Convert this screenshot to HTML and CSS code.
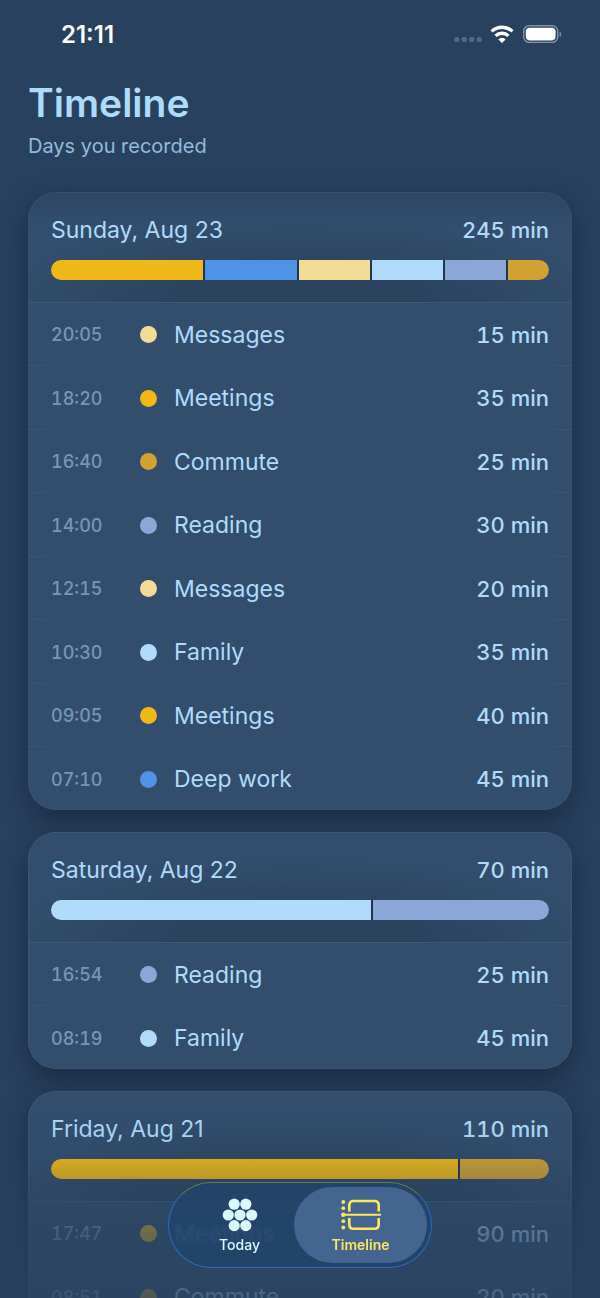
FILE: index.html
```
<!DOCTYPE html>
<html lang="en">
<head>
    <meta charset="UTF-8">
    <meta name="viewport" content="width=device-width, initial-scale=1.0">
    <title>Timeline</title>
    <link rel="stylesheet" href="styles.css">
</head>
<body>
<div class="screen">
    <div class="status-bar">
        <span class="clock">21:11</span>
        <div class="status-icons">
            <svg width="28" height="6" viewBox="0 0 28 6" fill="#566a84">
                <rect x="0.3" y="0" width="5" height="5" rx="1.6"/>
                <rect x="7.7" y="0" width="5" height="5" rx="1.6"/>
                <rect x="15.2" y="0" width="5" height="5" rx="1.6"/>
                <rect x="22.7" y="0" width="5" height="5" rx="1.6"/>
            </svg>
            <svg class="wifi" width="24" height="18" viewBox="0 0 24 18" fill="none" stroke="#fff" stroke-width="3.4">
                <path d="M1.6 6.4C7.4 .8 16.6 .8 22.4 6.4"/>
                <path d="M5.6 10.9c3.6-3.5 9.2-3.5 12.8 0"/>
                <path d="M12 18l-3.6-3.6c1.9-1.9 5.3-1.9 7.2 0z" fill="#fff" stroke="none"/>
            </svg>
            <svg class="battery" width="39" height="18" viewBox="0 0 39 18">
                <rect x=".7" y=".7" width="34" height="16.8" rx="5.6" fill="none" stroke="#8493a7" stroke-width="1.4"/>
                <rect x="2.8" y="2.8" width="29.8" height="12.6" rx="3.8" fill="#fff"/>
                <path d="M36.6 6.4c2 .8 2 4.8 0 5.6z" fill="#8493a7"/>
            </svg>
        </div>
    </div>

    <main class="content">
        <h1>Timeline</h1>
        <p class="subtitle">Days you recorded</p>

        <section class="day">
            <header class="day-header">
                <div class="day-title">
                    <h2>Sunday, Aug 23</h2>
                    <span class="minutes">245 min</span>
                </div>
                <div class="bar">
                    <span class="meetings" style="width: 30.6%"></span>
                    <span class="deep-work" style="width: 18.4%"></span>
                    <span class="messages" style="width: 14.3%"></span>
                    <span class="family" style="width: 14.3%"></span>
                    <span class="reading" style="width: 12.2%"></span>
                    <span class="commute" style="width: 10.2%"></span>
                </div>
            </header>
            <ul class="entries">
                <li><time>20:05</time><i class="dot messages"></i><span class="name">Messages</span><span class="minutes">15 min</span></li>
                <li><time>18:20</time><i class="dot meetings"></i><span class="name">Meetings</span><span class="minutes">35 min</span></li>
                <li><time>16:40</time><i class="dot commute"></i><span class="name">Commute</span><span class="minutes">25 min</span></li>
                <li><time>14:00</time><i class="dot reading"></i><span class="name">Reading</span><span class="minutes">30 min</span></li>
                <li><time>12:15</time><i class="dot messages"></i><span class="name">Messages</span><span class="minutes">20 min</span></li>
                <li><time>10:30</time><i class="dot family"></i><span class="name">Family</span><span class="minutes">35 min</span></li>
                <li><time>09:05</time><i class="dot meetings"></i><span class="name">Meetings</span><span class="minutes">40 min</span></li>
                <li><time>07:10</time><i class="dot deep-work"></i><span class="name">Deep work</span><span class="minutes">45 min</span></li>
            </ul>
        </section>

        <section class="day">
            <header class="day-header">
                <div class="day-title">
                    <h2>Saturday, Aug 22</h2>
                    <span class="minutes">70 min</span>
                </div>
                <div class="bar">
                    <span class="family" style="width: 64.3%"></span>
                    <span class="reading" style="width: 35.7%"></span>
                </div>
            </header>
            <ul class="entries">
                <li><time>16:54</time><i class="dot reading"></i><span class="name">Reading</span><span class="minutes">25 min</span></li>
                <li><time>08:19</time><i class="dot family"></i><span class="name">Family</span><span class="minutes">45 min</span></li>
            </ul>
        </section>

        <section class="day">
            <header class="day-header">
                <div class="day-title">
                    <h2>Friday, Aug 21</h2>
                    <span class="minutes">110 min</span>
                </div>
                <div class="bar">
                    <span class="meetings" style="width: 81.8%"></span>
                    <span class="commute" style="width: 18.2%"></span>
                </div>
            </header>
            <ul class="entries">
                <li><time>17:47</time><i class="dot meetings"></i><span class="name">Meetings</span><span class="minutes">90 min</span></li>
                <li><time>08:51</time><i class="dot commute"></i><span class="name">Commute</span><span class="minutes">20 min</span></li>
            </ul>
        </section>
    </main>

    <div class="fade"></div>
    <nav class="tab-bar">
        <button type="button" class="tab">
            <svg width="36" height="34" viewBox="0 0 36 34" fill="#dcf8ff">
                <circle cx="12.2" cy="6.2" r="5.6"/><circle cx="23.8" cy="6.2" r="5.6"/>
                <circle cx="6.3" cy="17" r="5.6"/><circle cx="18" cy="17" r="5.6"/><circle cx="29.7" cy="17" r="5.6"/>
                <circle cx="12.2" cy="27.6" r="5.6"/><circle cx="23.8" cy="27.6" r="5.6"/>
            </svg>
            Today
        </button>
        <button type="button" class="tab active">
            <svg width="40" height="34" viewBox="0 0 40 34" fill="none" stroke="#ffe75c" stroke-width="2.6">
                <path d="M8.3 13.5V7.2Q8.3 3 12.5 3H33.5Q37.7 3 37.7 7.2V13.5"/>
                <path d="M8.3 20V26.6Q8.3 30.8 12.5 30.8H33.5Q37.7 30.8 37.7 26.6V20"/>
                <path d="M2 16.7H40" stroke-width="1.9"/>
                <g fill="#ffe75c" stroke="none">
                    <circle cx="2.3" cy="4" r="1.9"/><circle cx="2.3" cy="10.2" r="1.9"/><circle cx="2.3" cy="16.7" r="2.2"/>
                    <circle cx="2.3" cy="23.2" r="1.9"/><circle cx="2.3" cy="29.5" r="1.9"/>
                </g>
            </svg>
            Timeline
        </button>
    </nav>
</div>
</body>
</html>
```
FILE: styles.css
```
* { box-sizing: border-box; }
body {
    margin: 0;
    background: #28415e;
    color: #aedbfb;
    font-family: Inter, "Liberation Sans", sans-serif;
}
h1, h2, p, ul { margin: 0; padding: 0; font-weight: 400; }

.screen { position: relative; display: flex; flex-direction: column; height: 100vh; overflow: hidden; }

/* status bar */
.status-bar { display: flex; flex: none; justify-content: space-between; align-items: center; height: 68px; padding: 0 38px 0 61px; }
.clock { color: #fff; font-size: 24px; font-weight: 600; }
.status-icons { display: flex; align-items: flex-end; }
.wifi { margin-left: 8px; }
.battery { margin-left: 9px; }

/* days */
.content { flex: 1; min-height: 0; padding: 10px 28px 0; overflow-y: auto; scrollbar-width: none; }
h1 { font-size: 39px; line-height: 50px; font-weight: 600; }
.subtitle { margin-bottom: 27px; color: #91bbdc; font-size: 20px; line-height: 37px; }
.day {
    margin-bottom: 22px;
    border-radius: 28px;
    background: #324e6c;
    box-shadow: inset 0 0 0 1px #3b5674, 0 10px 26px rgba(20, 32, 54, 0.65);
    overflow: hidden;
}
.day:first-of-type { background: linear-gradient(#2c4663, #324e6c 30px); box-shadow: inset 0 0 0 1px #355070, 0 10px 26px rgba(20, 32, 54, 0.65); }
.day-header {
    height: 110px;
    padding: 22px 23px 0;
    background: radial-gradient(ellipse 55% 75% at 50% 100%, rgba(38, 60, 84, 0.6) 40%, rgba(38, 60, 84, 0));
}
.day-title { display: flex; justify-content: space-between; align-items: center; height: 32px; margin-bottom: 14px; }
h2 { font-size: 23px; }
.minutes { font-size: 22px; font-weight: 550; font-variant-numeric: tabular-nums; }
.bar {
    display: flex;
    gap: 2px;
    height: 20px;
    border-radius: 10px;
    background: #203550;
    overflow: hidden;
}
.bar span { flex: none; }

.entries { list-style: none; }
.entries li { display: flex; align-items: center; height: 63px; padding: 2px 23px 0; }
.entries li:first-child { background: linear-gradient(#3d5977, #3d5977) top / 100% 1px no-repeat; }
.entries li:nth-child(even) { height: 64px; }
/* row line shows only near the card edges */
.entries li + li { background: linear-gradient(to right, #3d5875, transparent 7%, transparent 93%, #3d5875) top / 100% 1px no-repeat; }
.entries .name { flex: 1; font-size: 23px; }
time { width: 89px; color: #7597b7; font-size: 18px; font-weight: 450; font-variant-numeric: tabular-nums; }
.dot { width: 17px; height: 17px; margin-right: 17px; border-radius: 50%; }

.meetings { background: #f0b818; }
.deep-work { background: #4f93e6; }
.messages { background: #f5db98; }
.family { background: #b0dbfb; }
.reading { background: #8ba7d7; }
.commute { background: #d2a033; }

/* tab bar */
.fade {
    position: absolute;
    right: 0;
    bottom: 0;
    left: 0;
    height: 190px;
    background: linear-gradient(rgba(40, 65, 94, 0), rgba(40, 65, 94, 0.12) 27%, rgba(40, 65, 94, 0.28) 38%, rgba(40, 65, 94, 0.66) 66%, rgba(40, 65, 94, 0.76));
    pointer-events: none;
}
.tab-bar {
    position: absolute;
    bottom: 30px;
    left: 50%;
    display: flex;
    width: 264px;
    height: 86px;
    padding: 4px;
    border: 1px solid #2a6cbe;
    border-top-color: #64794f;
    border-radius: 43px;
    background: rgba(34, 68, 108, 0.8);
    backdrop-filter: blur(1px);
    transform: translateX(-50%);
}
.tab {
    display: flex;
    flex: 1;
    flex-direction: column;
    align-items: center;
    gap: 4px;
    padding: 11px 0 0 12px;
    border: 0;
    border-radius: 38px;
    background: none;
    color: #dcf8ff;
    font-family: inherit;
    font-size: 14px;
    font-weight: 500;
    cursor: pointer;
}
.tab.active { flex: none; width: 133px; padding-left: 0; background: #44658f; color: #ffe75c; font-weight: 600; }
```
